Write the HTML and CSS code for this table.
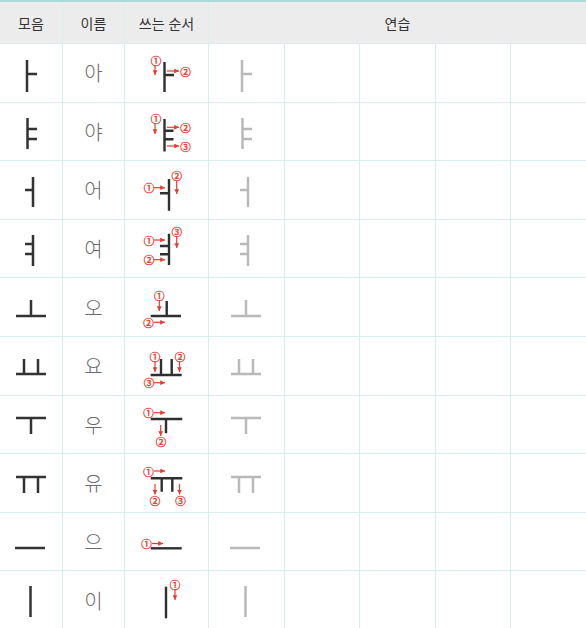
FILE: index.html
```html
<!DOCTYPE html>
<html lang="ko">
<head>
<meta charset="utf-8">
<title>모음 쓰기</title>
<link rel="stylesheet" href="styles.css">
</head>
<body>
<svg class="defs" aria-hidden="true">
  <defs>
    <marker id="ah" viewBox="0 0 6 6" refX="6" refY="3" markerWidth="4" markerHeight="4" orient="auto">
      <path d="M0,0 L6,3 L0,6 z" fill="#ea3b30"/>
    </marker>
    <symbol id="v-a" viewBox="0 1 62 58"><path d="M27 17V49M27 31H37"/></symbol>
    <symbol id="v-ya" viewBox="0 1 62 58"><path d="M27.5 17V48M27.5 28H37M27.5 38H37"/></symbol>
    <symbol id="v-eo" viewBox="0 1 62 58"><path d="M33 17V47M25 30H33"/></symbol>
    <symbol id="v-yeo" viewBox="0 1 62 58"><path d="M33 16V47M25 25H33M25 35H33"/></symbol>
    <symbol id="v-o" viewBox="0 1 62 58"><path d="M31 23V39M16 39H46"/></symbol>
    <symbol id="v-yo" viewBox="0 1 62 58"><path d="M24 23V38M38 23V38M16 38H46"/></symbol>
    <symbol id="v-u" viewBox="0 1 62 58"><path d="M16 24H46M31 24V40"/></symbol>
    <symbol id="v-yu" viewBox="0 1 62 58"><path d="M16 24H46M24 24V40M38 24V40"/></symbol>
    <symbol id="v-eu" viewBox="0 1 62 58"><path d="M15 36H45"/></symbol>
    <symbol id="v-i" viewBox="0 1 62 58"><path d="M30.5 16V47"/></symbol>
  </defs>
</svg>

<div class="sheet">
  <div class="grid">
    <div class="hd">모음</div>
    <div class="hd">이름</div>
    <div class="hd">쓰는 순서</div>
    <div class="hd practice">연습</div>

    <!-- ㅏ -->
    <div class="c"><svg class="glyph dark"><use href="#v-a"/></svg></div>
    <div class="c name">아</div>
    <div class="c"><svg class="order" viewBox="1 1 83 58">
      <path class="st" d="M40.5 19V49M41 32H50"/>
      <line class="ar" x1="31" y1="22" x2="31" y2="32"/>
      <line class="ar" x1="43" y1="28" x2="55" y2="28"/>
      <text class="num" x="32" y="17">①</text>
      <text class="num" x="61.5" y="28">②</text>
    </svg></div>
    <div class="c"><svg class="glyph light"><use href="#v-a"/></svg></div>
    <div class="c"></div><div class="c"></div><div class="c"></div><div class="c"></div>

    <!-- ㅑ -->
    <div class="c"><svg class="glyph dark"><use href="#v-ya"/></svg></div>
    <div class="c name">야</div>
    <div class="c"><svg class="order" viewBox="1 1 83 58">
      <path class="st" d="M40.5 18V50.5M41 29.7H49.5M41 38.3H49.5"/>
      <line class="ar" x1="31" y1="22" x2="31" y2="33"/>
      <line class="ar" x1="43" y1="26.3" x2="55" y2="26.3"/>
      <line class="ar" x1="43" y1="45" x2="55" y2="45"/>
      <text class="num" x="32" y="17">①</text>
      <text class="num" x="61.5" y="26.3">②</text>
      <text class="num" x="61.5" y="45">③</text>
    </svg></div>
    <div class="c"><svg class="glyph light"><use href="#v-ya"/></svg></div>
    <div class="c"></div><div class="c"></div><div class="c"></div><div class="c"></div>

    <!-- ㅓ -->
    <div class="c"><svg class="glyph dark"><use href="#v-eo"/></svg></div>
    <div class="c name">어</div>
    <div class="c"><svg class="order" viewBox="1 1 83 58">
      <path class="st" d="M45 19V50.7M36 33.3H45"/>
      <line class="ar" x1="30" y1="27.7" x2="41" y2="27.7"/>
      <line class="ar" x1="52.7" y1="21" x2="52.7" y2="34"/>
      <text class="num" x="25" y="27.7">①</text>
      <text class="num" x="52.7" y="15.7">②</text>
    </svg></div>
    <div class="c"><svg class="glyph light"><use href="#v-eo"/></svg></div>
    <div class="c"></div><div class="c"></div><div class="c"></div><div class="c"></div>

    <!-- ㅕ -->
    <div class="c"><svg class="glyph dark"><use href="#v-yeo"/></svg></div>
    <div class="c name">여</div>
    <div class="c"><svg class="order" viewBox="1 1 83 58">
      <path class="st" d="M45 14.7V46M36 27H45M36 35.3H45"/>
      <line class="ar" x1="30" y1="21" x2="41" y2="21"/>
      <line class="ar" x1="30" y1="40.7" x2="41" y2="40.7"/>
      <line class="ar" x1="52.7" y1="17" x2="52.7" y2="29"/>
      <text class="num" x="25" y="21">①</text>
      <text class="num" x="25" y="40.7">②</text>
      <text class="num" x="52.7" y="12">③</text>
    </svg></div>
    <div class="c"><svg class="glyph light"><use href="#v-yeo"/></svg></div>
    <div class="c"></div><div class="c"></div><div class="c"></div><div class="c"></div>

    <!-- ㅗ -->
    <div class="c"><svg class="glyph dark"><use href="#v-o"/></svg></div>
    <div class="c name">오</div>
    <div class="c"><svg class="order" viewBox="1 1 83 58">
      <path class="st" d="M42.7 24V39M26.7 39H57"/>
      <line class="ar" x1="35.3" y1="23" x2="35.3" y2="34"/>
      <line class="ar" x1="30" y1="45.3" x2="41" y2="45.3"/>
      <text class="num" x="35.3" y="18">①</text>
      <text class="num" x="24.5" y="45.3">②</text>
    </svg></div>
    <div class="c"><svg class="glyph light"><use href="#v-o"/></svg></div>
    <div class="c"></div><div class="c"></div><div class="c"></div><div class="c"></div>

    <!-- ㅛ -->
    <div class="c"><svg class="glyph dark"><use href="#v-yo"/></svg></div>
    <div class="c name">요</div>
    <div class="c"><svg class="order" viewBox="1 1 83 58">
      <path class="st" d="M37 23V39M47.7 23V39M26.7 39H57.7"/>
      <line class="ar" x1="31" y1="25" x2="31" y2="36"/>
      <line class="ar" x1="55.5" y1="25" x2="55.5" y2="36"/>
      <line class="ar" x1="30" y1="46.7" x2="41" y2="46.7"/>
      <text class="num" x="31" y="20">①</text>
      <text class="num" x="56" y="20">②</text>
      <text class="num" x="25" y="46.7">③</text>
    </svg></div>
    <div class="c"><svg class="glyph light"><use href="#v-yo"/></svg></div>
    <div class="c"></div><div class="c"></div><div class="c"></div><div class="c"></div>

    <!-- ㅜ -->
    <div class="c"><svg class="glyph dark"><use href="#v-u"/></svg></div>
    <div class="c name">우</div>
    <div class="c"><svg class="order" viewBox="1 1 83 58">
      <path class="st" d="M26.7 25H58.3M42 25V39.3"/>
      <line class="ar" x1="30" y1="18.7" x2="41" y2="18.7"/>
      <line class="ar" x1="36.7" y1="31" x2="36.7" y2="42"/>
      <text class="num" x="24.5" y="18.7">①</text>
      <text class="num" x="37" y="47.7">②</text>
    </svg></div>
    <div class="c"><svg class="glyph light"><use href="#v-u"/></svg></div>
    <div class="c"></div><div class="c"></div><div class="c"></div><div class="c"></div>

    <!-- ㅠ -->
    <div class="c"><svg class="glyph dark"><use href="#v-yu"/></svg></div>
    <div class="c name">유</div>
    <div class="c"><svg class="order" viewBox="1 1 83 58">
      <path class="st" d="M26.7 25.3H58.3M37.7 25.3V38.7M48.3 25.3V38.7"/>
      <line class="ar" x1="30" y1="18" x2="41" y2="18"/>
      <line class="ar" x1="31" y1="31" x2="31" y2="41.5"/>
      <line class="ar" x1="55.5" y1="31" x2="55.5" y2="41.5"/>
      <text class="num" x="24.5" y="18">①</text>
      <text class="num" x="31" y="47">②</text>
      <text class="num" x="56.5" y="47">③</text>
    </svg></div>
    <div class="c"><svg class="glyph light"><use href="#v-yu"/></svg></div>
    <div class="c"></div><div class="c"></div><div class="c"></div><div class="c"></div>

    <!-- ㅡ -->
    <div class="c"><svg class="glyph dark"><use href="#v-eu"/></svg></div>
    <div class="c name">으</div>
    <div class="c"><svg class="order" viewBox="1 1 83 58">
      <path class="st" d="M26.7 36.3H57.7"/>
      <line class="ar" x1="28" y1="31.5" x2="39" y2="31.5"/>
      <text class="num" x="22.5" y="31.5">①</text>
    </svg></div>
    <div class="c"><svg class="glyph light"><use href="#v-eu"/></svg></div>
    <div class="c"></div><div class="c"></div><div class="c"></div><div class="c"></div>

    <!-- ㅣ -->
    <div class="c"><svg class="glyph dark"><use href="#v-i"/></svg></div>
    <div class="c name">이</div>
    <div class="c"><svg class="order" viewBox="1 1 83 58">
      <path class="st" d="M42 16.7V48.3"/>
      <line class="ar" x1="51" y1="19" x2="51" y2="30"/>
      <text class="num" x="51" y="14">①</text>
    </svg></div>
    <div class="c"><svg class="glyph light"><use href="#v-i"/></svg></div>
    <div class="c"></div><div class="c"></div><div class="c"></div><div class="c"></div>
  </div>
</div>
</body>
</html>
```

FILE: styles.css
```css
html, body {
  margin: 0;
  padding: 0;
  background: #ffffff;
}

body {
  font-family: "Noto Sans CJK KR", "Noto Sans", sans-serif;
  color: #333333;
}

.defs {
  position: absolute;
  width: 0;
  height: 0;
  overflow: hidden;
}

.sheet {
  width: 586px;
  height: 626px;
  border-top: 2px solid #a9dcd8;
  overflow: hidden;
}

.grid {
  display: grid;
  grid-template-columns: 62px 61px 83px repeat(5, 1fr);
  grid-template-rows: 41px repeat(10, 57.6px);
  gap: 1px;
  background: #d8efed;
}

.hd {
  background: #ececec;
  display: flex;
  align-items: center;
  justify-content: center;
  font-size: 14px;
  color: #333333;
}

.hd.practice {
  grid-column: span 5;
}

.c {
  background: #ffffff;
  display: flex;
  align-items: center;
  justify-content: center;
  overflow: hidden;
}

.name {
  font-size: 20px;
  font-weight: 200;
  color: #6a6a6a;
}

.glyph {
  width: 62px;
  height: 58px;
  flex: none;
  fill: none;
  stroke-width: 2.5;
}

.glyph.dark {
  stroke: #333333;
}

.glyph.light {
  stroke: #b9b9b9;
}

.order {
  width: 83px;
  height: 58px;
  flex: none;
}

.order .st {
  fill: none;
  stroke: #2f2f2f;
  stroke-width: 2.4;
}

.order .ar {
  stroke: #ea3b30;
  stroke-width: 1.2;
  marker-end: url(#ah);
}

.order .num {
  fill: #ea3b30;
  stroke: #ea3b30;
  stroke-width: 0.4;
  font-family: "Noto Sans CJK KR", "DejaVu Sans", sans-serif;
  font-size: 10.5px;
  text-anchor: middle;
  dominant-baseline: central;
}
```
